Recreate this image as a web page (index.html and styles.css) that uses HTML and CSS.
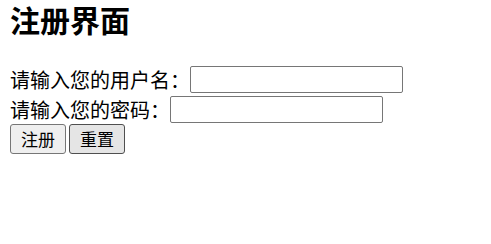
FILE: index.html
```html
<!DOCTYPE html>
<html lang="zh-CN">
<head>
<meta charset="utf-8">
<title>注册界面</title>
<link rel="stylesheet" href="styles.css">
</head>
<body>
<h2 class="title">注册界面</h2>
<form class="form">
  <div class="row">
    <label class="label" for="user">请输入您的用户名：</label>
    <input class="field" id="user" type="text">
  </div>
  <div class="row">
    <label class="label" for="pwd">请输入您的密码：</label>
    <input class="field" id="pwd" type="password">
  </div>
  <div class="actions">
    <button class="btn" type="submit">注册</button>
    <button class="btn btn-hover" type="reset">重置</button>
  </div>
</form>
</body>
</html>
```

FILE: styles.css
```css
html, body {
  background: #ffffff;
}
body {
  margin: 0 10px;
  padding-top: 1px;
  font-family: "Noto Sans CJK SC", "Noto Sans", sans-serif;
  color: #000000;
}
.title {
  margin: -4px 0 0;
  font-size: 30px;
  font-weight: 700;
  line-height: 44px;
}
.form {
  margin-top: 25px;
  display: flex;
  flex-direction: column;
}
.row {
  display: flex;
  align-items: center;
  height: 27px;
  margin-bottom: 3px;
}
.label {
  font-size: 20px;
  line-height: 27px;
  white-space: nowrap;
}
.field {
  box-sizing: border-box;
  width: 213px;
  height: 27px;
  margin: 0;
  border: 1px solid #767676;
  border-radius: 2px;
  background: #ffffff;
  padding: 1px 3px;
  font-size: 16px;
}
.actions {
  display: flex;
  gap: 3px;
  margin-top: -2px;
}
.btn {
  box-sizing: border-box;
  width: 56px;
  height: 30px;
  margin: 0;
  padding: 0;
  border: 1px solid #767676;
  border-radius: 3px;
  background: #efefef;
  color: #000000;
  font-family: "Noto Sans CJK SC", sans-serif;
  font-size: 17px;
  line-height: 28px;
}
.btn-hover {
  background: #e5e5e5;
  border-color: #4f4f4f;
}
```
